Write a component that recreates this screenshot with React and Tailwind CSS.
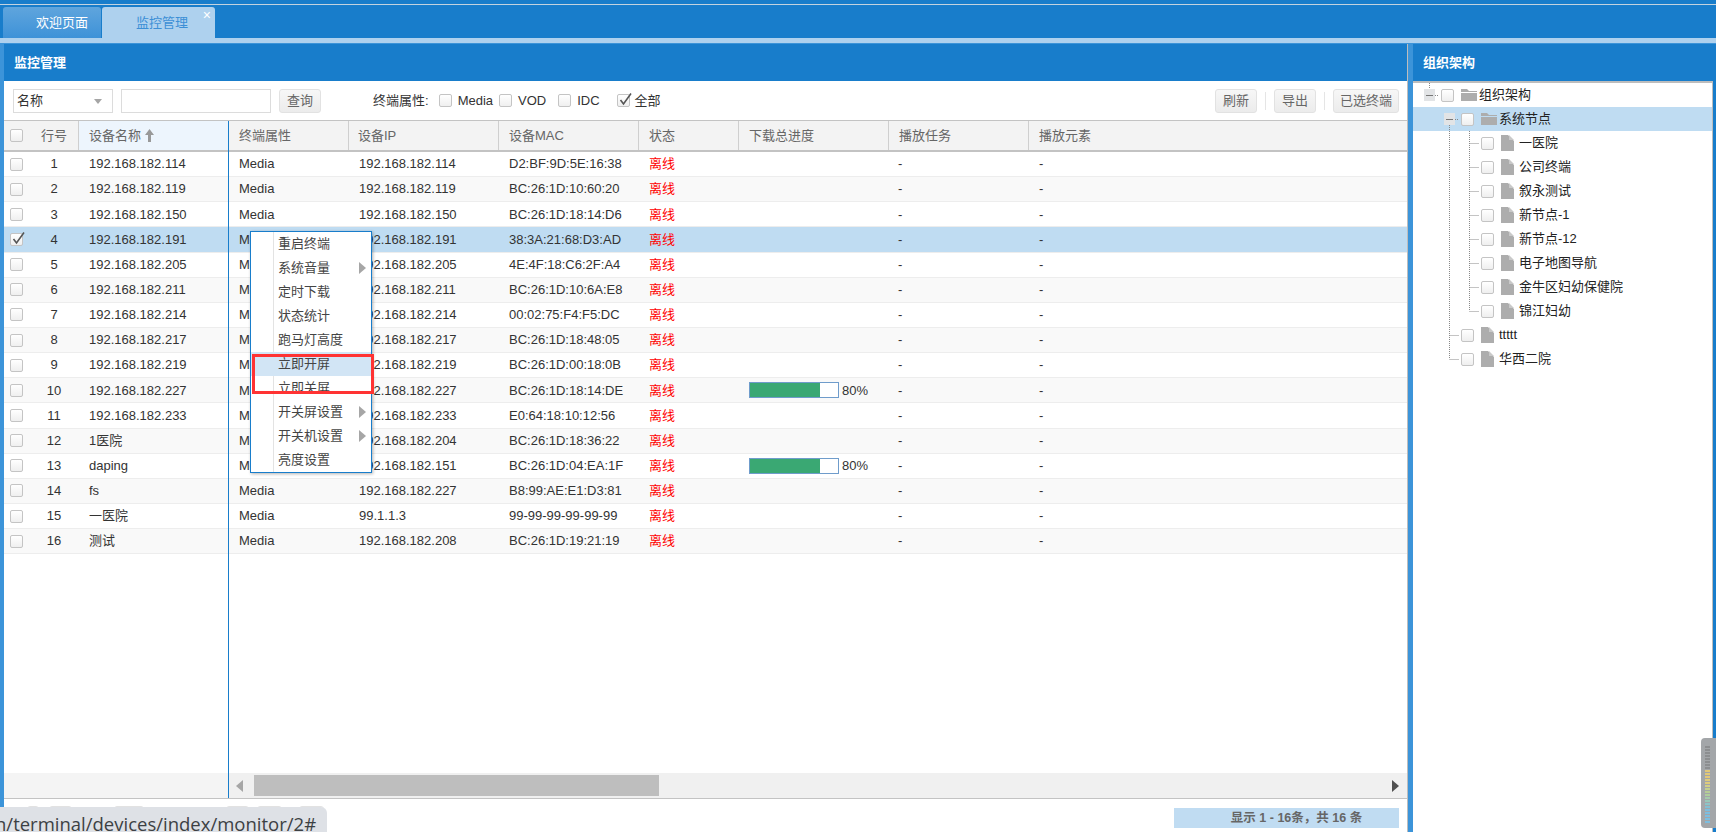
import React from "react";

const devices = [
  { name: "192.168.182.114", ip: "192.168.182.114", mac: "D2:BF:9D:5E:16:38" },
  { name: "192.168.182.119", ip: "192.168.182.119", mac: "BC:26:1D:10:60:20" },
  { name: "192.168.182.150", ip: "192.168.182.150", mac: "BC:26:1D:18:14:D6" },
  { name: "192.168.182.191", ip: "192.168.182.191", mac: "38:3A:21:68:D3:AD", selected: true },
  { name: "192.168.182.205", ip: "192.168.182.205", mac: "4E:4F:18:C6:2F:A4" },
  { name: "192.168.182.211", ip: "192.168.182.211", mac: "BC:26:1D:10:6A:E8" },
  { name: "192.168.182.214", ip: "192.168.182.214", mac: "00:02:75:F4:F5:DC" },
  { name: "192.168.182.217", ip: "192.168.182.217", mac: "BC:26:1D:18:48:05" },
  { name: "192.168.182.219", ip: "192.168.182.219", mac: "BC:26:1D:00:18:0B" },
  { name: "192.168.182.227", ip: "192.168.182.227", mac: "BC:26:1D:18:14:DE", progress: 80 },
  { name: "192.168.182.233", ip: "192.168.182.233", mac: "E0:64:18:10:12:56" },
  { name: "1医院", ip: "192.168.182.204", mac: "BC:26:1D:18:36:22" },
  { name: "daping", ip: "192.168.182.151", mac: "BC:26:1D:04:EA:1F", progress: 80 },
  { name: "fs", ip: "192.168.182.227", mac: "B8:99:AE:E1:D3:81" },
  { name: "一医院", ip: "99.1.1.3", mac: "99-99-99-99-99-99" },
  { name: "测试", ip: "192.168.182.208", mac: "BC:26:1D:19:21:19" },
];

const menuItems = [
  { label: "重启终端" },
  { label: "系统音量", sub: true },
  { label: "定时下载" },
  { label: "状态统计" },
  { label: "跑马灯高度" },
  { label: "立即开屏", active: true },
  { label: "立即关屏" },
  { label: "开关屏设置", sub: true },
  { label: "开关机设置", sub: true },
  { label: "亮度设置" },
];

// guides: one entry per 20px cell before the checkbox
const treeNodes = [
  { label: "组织架构", guides: ["rootSwitch"], icon: "folder" },
  { label: "系统节点", guides: ["", "switch"], icon: "folder", selected: true },
  { label: "一医院", guides: ["", "v", "tee"], icon: "file" },
  { label: "公司终端", guides: ["", "v", "tee"], icon: "file" },
  { label: "叙永测试", guides: ["", "v", "tee"], icon: "file" },
  { label: "新节点-1", guides: ["", "v", "tee"], icon: "file" },
  { label: "新节点-12", guides: ["", "v", "tee"], icon: "file" },
  { label: "电子地图导航", guides: ["", "v", "tee"], icon: "file" },
  { label: "金牛区妇幼保健院", guides: ["", "v", "tee"], icon: "file" },
  { label: "锦江妇幼", guides: ["", "v", "elbow"], icon: "file" },
  { label: "ttttt", guides: ["", "tee"], icon: "file" },
  { label: "华西二院", guides: ["", "elbow"], icon: "file" },
];

const columns = [
  { label: "终端属性", className: "w-[120px] pl-[10px]" },
  { label: "设备IP", className: "w-[150px] pl-[9px]" },
  { label: "设备MAC", className: "w-[140px] pl-[10px]" },
  { label: "状态", className: "w-[100px] pl-[10px]" },
  { label: "下载总进度", className: "w-[150px] pl-[10px]" },
  { label: "播放任务", className: "w-[140px] pl-[10px]" },
  { label: "播放元素", className: "flex-1 pl-[10px]" },
];

const pagerStubs = ["w-[12px] ml-[23px]", "w-[23px] ml-[10px]", "w-[30px] ml-[42px] bg-[#eee]", "w-[23px] ml-[82px]", "w-[25px] ml-[8px]", "w-[25px] ml-[17px]"];

const meterColors = ["#8c8e90", "#8c8e90", "#8c8e90", "#8c8e90", "#8c8e90", "#8c8e90", "#8c8e90", "#8c8e90", "#e2c878", "#e2c878", "#e2c878", "#dfcb7c", "#dfcb7c", "#d2cf86", "#c4d08e", "#b7cd94", "#b0cd9c", "#a5cbaa", "#98c8b8", "#8cc4c8", "#82c0d2", "#7cbee0", "#7cbee0", "#7cbee0", "#7cbee0", "#7cbee0"];

const CheckBox = ({ checked }) => (
  <span className="relative block w-[13px] h-[13px] shrink-0 rounded-[2px] border border-[#c4c4c4] bg-gradient-to-b from-white to-[#efefef]">
    {checked && (
      <svg className="absolute left-0 -top-[4px]" width="16" height="16" viewBox="0 0 16 16" fill="none">
        <path d="M2.5 9 L5.5 13 L13 2.5" stroke="#555" strokeWidth="1.6" />
      </svg>
    )}
  </span>
);

const ToolButton = ({ children, className = "" }) => (
  <button className={`h-6 rounded-[3px] border border-[#e2e2e2] bg-gradient-to-b from-[#f7f7f7] to-[#ececec] text-[13px] text-[#666] ${className}`}>
    {children}
  </button>
);

const TreeGuide = ({ type }) => {
  const dots = { stroke: "#888", strokeDasharray: "1 1" };
  return (
    <svg className="shrink-0" width="20" height="24" viewBox="0 0 20 24">
      {(type === "v" || type === "tee") && <line x1="10.5" y1="0" x2="10.5" y2="24" {...dots} />}
      {type === "elbow" && <line x1="10.5" y1="0" x2="10.5" y2="12" {...dots} />}
      {(type === "tee" || type === "elbow") && <line x1="10.5" y1="12.5" x2="20" y2="12.5" {...dots} />}
      {type === "rootSwitch" && <line x1="10.5" y1="0" x2="10.5" y2="6" {...dots} />}
      {type === "switch" && <line x1="10.5" y1="18" x2="10.5" y2="24" {...dots} />}
      {(type === "switch" || type === "rootSwitch") && (
        <>
          <rect x="5" y="6" width="11" height="12" fill="#e2e4e6" />
          <line x1="7" y1="12.5" x2="14" y2="12.5" stroke="#777" />
          <line x1="16" y1="12.5" x2="20" y2="12.5" {...dots} />
        </>
      )}
    </svg>
  );
};

const TreeIcon = ({ type }) =>
  type === "folder" ? (
    <svg className="shrink-0" width="20" height="24" viewBox="0 0 20 24">
      <path d="M2 6 H8 L10 8 H18 V9 H2 Z M2 10 H18 V18 H2 Z" fill="#adadad" />
    </svg>
  ) : (
    <svg className="shrink-0" width="20" height="24" viewBox="0 0 20 24">
      <path d="M2 4 H9 L15 10 V20 H2 Z" fill="#adadad" />
      <path d="M10 4 L15 9 H10 Z" fill="#c9c9c9" />
    </svg>
  );

const Arrow = ({ className = "", fill = "#a6a6a6", left }) => (
  <svg className={className} width="7" height="12" viewBox="0 0 7 12">
    <path d={left ? "M7 0 V12 L0 6 Z" : "M0 0 V12 L7 6 Z"} fill={fill} />
  </svg>
);

const rowBg = (device, index) => {
  if (device.selected) return "bg-[#bfdcf2]";
  return index % 2 === 1 ? "bg-[#f9f9f9]" : "bg-white";
};

const App = () => {
  return (
    <div className="relative w-[1716px] h-[832px] overflow-hidden bg-white flex flex-col text-[13px] text-[#333] font-['Liberation_Sans','Noto_Sans_CJK_SC',sans-serif]">
      {/* tabs */}
      <div className="h-[44px] shrink-0 bg-[#187dcb] flex flex-col">
        <div className="h-[5px] border-b border-[#c3d3df]" />
        <div className="h-[33px] pl-[3px] pt-[2px] flex">
          <div className="w-[98px] h-[31px] rounded-t-[3px] bg-gradient-to-b from-[#5fa5dd] to-[#3d92d8] text-white pl-[33px] flex items-center">
            欢迎页面
          </div>
          <div className="relative ml-[1px] w-[113px] h-[31px] rounded-t-[3px] bg-[#aed1ee] text-[#3c8fd6] pl-[34px] flex items-center">
            监控管理
            <span className="absolute right-[4px] top-[1px] text-[14px] leading-[14px] text-white">×</span>
          </div>
        </div>
        <div className="h-[5px] bg-[#aed1ee]" />
        <div className="h-[1px] bg-[#3c94d9]" />
      </div>

      <div className="flex flex-1 min-h-0">
        <div className="w-[4px] shrink-0 bg-[#3c94d9]" />

        {/* monitor panel */}
        <div className="w-[1404px] shrink-0 flex flex-col border-r border-[#bdbdbd]">
          <div className="h-[37px] shrink-0 bg-[#187dcb] text-white font-bold pl-[10px] flex items-center">监控管理</div>

          <div className="h-[39px] shrink-0 pl-[9px] pr-[8px] flex items-center">
            <div className="w-[100px] h-6 border border-[#dcdcdc] pl-[3px] pt-[1px] flex items-center justify-between pr-[10px]">
              <span>名称</span>
              <span className="w-0 h-0 border-x-[4px] border-x-transparent border-t-[5px] border-t-[#a5a5a5]" />
            </div>
            <div className="ml-[8px] w-[150px] h-6 border border-[#dcdcdc]" />
            <ToolButton className="ml-[8px] w-[42px]">查询</ToolButton>
            <span className="ml-[52px]">终端属性:</span>
            <span className="ml-[10px]"><CheckBox /></span>
            <span className="ml-[6px]">Media</span>
            <span className="ml-[6px]"><CheckBox /></span>
            <span className="ml-[6px]">VOD</span>
            <span className="ml-[12px]"><CheckBox /></span>
            <span className="ml-[6px]">IDC</span>
            <span className="ml-[17px]"><CheckBox checked /></span>
            <span className="ml-[5px]">全部</span>
            <div className="ml-auto flex items-center">
              <ToolButton className="w-[42px]">刷新</ToolButton>
              <span className="mx-[8px] w-px h-[18px] bg-[#e5e5e5]" />
              <ToolButton className="w-[42px]">导出</ToolButton>
              <span className="mx-[8px] w-px h-[18px] bg-[#e5e5e5]" />
              <ToolButton className="w-[66px]">已选终端</ToolButton>
            </div>
          </div>

          {/* table */}
          <div className="flex-1 min-h-0 flex border-y border-[#c3c3c3]">
            <div className="w-[225px] shrink-0 flex flex-col border-r border-[#187dcb]">
              <div className="h-[31px] shrink-0 flex border-b-2 border-[#c3c3c3] text-[#666] bg-[#f3f3f3]">
                <div className="w-[26px] pl-[6px] flex items-center"><CheckBox /></div>
                <div className="w-[48px] flex items-center justify-center">行号</div>
                <div className="flex-1 pl-[10px] flex items-center gap-[4px] bg-[#edf5fd] border-l border-[#cfcfcf]">
                  设备名称
                  <svg width="9" height="13" viewBox="0 0 9 13"><path d="M4.5 0 L9 6 H6 V13 H3 V6 H0 Z" fill="#999" /></svg>
                </div>
              </div>
              {devices.map((device, index) => (
                <div key={index} className={`h-[25.15px] shrink-0 flex border-b border-[#ededed] ${rowBg(device, index)}`}>
                  <div className="w-[26px] pl-[6px] flex items-center"><CheckBox checked={device.selected} /></div>
                  <div className="w-[48px] flex items-center justify-center">{index + 1}</div>
                  <div className="flex-1 pl-[11px] flex items-center">{device.name}</div>
                </div>
              ))}
              <div className="flex-1" />
              <div className="h-[25px] shrink-0 bg-[#f4f4f4]" />
            </div>

            <div className="flex-1 min-w-0 flex flex-col">
              <div className="h-[31px] shrink-0 flex border-b-2 border-[#c3c3c3] text-[#666] bg-[#f3f3f3]">
                {columns.map((col) => (
                  <div key={col.label} className={`${col.className} flex items-center border-r border-[#cfcfcf] last:border-r-0`}>
                    {col.label}
                  </div>
                ))}
              </div>
              {devices.map((device, index) => (
                <div key={index} className={`h-[25.15px] shrink-0 flex items-center border-b border-[#ededed] ${rowBg(device, index)}`}>
                  <div className="w-[120px] pl-[10px]">Media</div>
                  <div className="w-[150px] pl-[10px]">{device.ip}</div>
                  <div className="w-[140px] pl-[10px]">{device.mac}</div>
                  <div className="w-[100px] pl-[10px] text-[#f00]">离线</div>
                  <div className="w-[150px] pl-[10px] flex items-center">
                    {device.progress && (
                      <>
                        <div className="w-[90px] h-[16px] border border-[#6f9ccb] bg-white">
                          <div className="h-full bg-[#3aa873] w-[80%]" />
                        </div>
                        <span className="ml-[3px]">{device.progress}%</span>
                      </>
                    )}
                  </div>
                  <div className="w-[140px] pl-[9px]">-</div>
                  <div className="flex-1 pl-[10px]">-</div>
                </div>
              ))}
              <div className="flex-1" />
              <div className="h-[25px] shrink-0 bg-[#f0f0f0] flex items-center">
                <Arrow left className="ml-[7px]" />
                <div className="ml-[11px] w-[405px] h-[21px] bg-[#bebebe]" />
                <Arrow fill="#505050" className="ml-auto mr-[8px]" />
              </div>
            </div>
          </div>

          {/* footer */}
          <div className="h-[33px] shrink-0 pt-[9px] pr-[8px] flex items-start">
            <div className="-mt-[2px] flex">
              {pagerStubs.map((stub, i) => (
                <span key={i} className={`h-6 rounded-[3px] border border-[#e2e2e2] ${stub}`} />
              ))}
            </div>
            <div className="ml-auto w-[225px] h-[20px] bg-[#c0dcf2] text-[#666] font-bold text-[12.5px] flex items-center justify-center pl-[20px]">
              显示 1 - 16条，共 16 条
            </div>
          </div>
        </div>

        <div className="w-[5px] shrink-0 bg-[#3c94d9]" />

        {/* organisation tree */}
        <div className="flex-1 min-w-0 flex flex-col">
          <div className="h-[37px] shrink-0 bg-[#187dcb] text-white font-bold pl-[10px] flex items-center">组织架构</div>
          <div className="flex-1 border-t-2 border-r border-[#bdbdbd] pl-[6px] bg-white">
            {treeNodes.map((node) => (
              <div key={node.label} className={`-ml-[6px] pl-[6px] h-[24px] flex items-center ${node.selected ? "bg-[#bfdcf2]" : ""}`}>
                {node.guides.map((guide, i) => (
                  <TreeGuide key={i} type={guide} />
                ))}
                <span className="w-[20px] pl-[2px] shrink-0"><CheckBox /></span>
                <TreeIcon type={node.icon} />
                <span className="text-[#222]">{node.label}</span>
              </div>
            ))}
          </div>
        </div>
        <div className="w-[3px] shrink-0 bg-[#187dcb]" />
      </div>

      {/* context menu */}
      <div className="absolute left-[250px] top-[231px] w-[122px] border border-[#187dcb] bg-white shadow-[1px_1px_3px_rgba(0,0,0,0.3)] text-[#444]">
        {menuItems.map((item) => (
          <div key={item.label} className={`h-[24px] flex items-center ${item.active ? "bg-[#d2e5f5]" : ""}`}>
            <div className={`w-[23px] h-full shrink-0 border-r ${item.active ? "border-transparent" : "border-[#e3e3e3]"}`} />
            <span className="pl-[4px]">{item.label}</span>
            {item.sub && <Arrow className="ml-auto mr-[5px]" />}
          </div>
        ))}
      </div>
      <div className="absolute left-[252px] top-[354px] w-[122px] h-[40px] border-[3px] border-[#f33]" />

      {/* browser link preview */}
      <div className="absolute left-0 bottom-0 w-[327px] h-[25px] rounded-tr-[6px] bg-[#dee1e6] text-[#3c4043] text-[18.5px] leading-[25px] pt-[4px] whitespace-nowrap overflow-hidden font-['Open_Sans',sans-serif]">
        <span className="block -ml-[5px]">n/terminal/devices/index/monitor/2#</span>
      </div>

      {/* volume widget at the screen edge */}
      <div className="absolute right-0 top-[738px] w-[15px] h-[90px] rounded-l-[4px] bg-[#a3a6a9] pt-[8px] pl-[4px] flex flex-col gap-[1px]">
        {meterColors.map((color, i) => (
          <span key={i} className="block w-[5px] h-[2px]" style={{ backgroundColor: color }} />
        ))}
      </div>
    </div>
  );
};

export default App;
